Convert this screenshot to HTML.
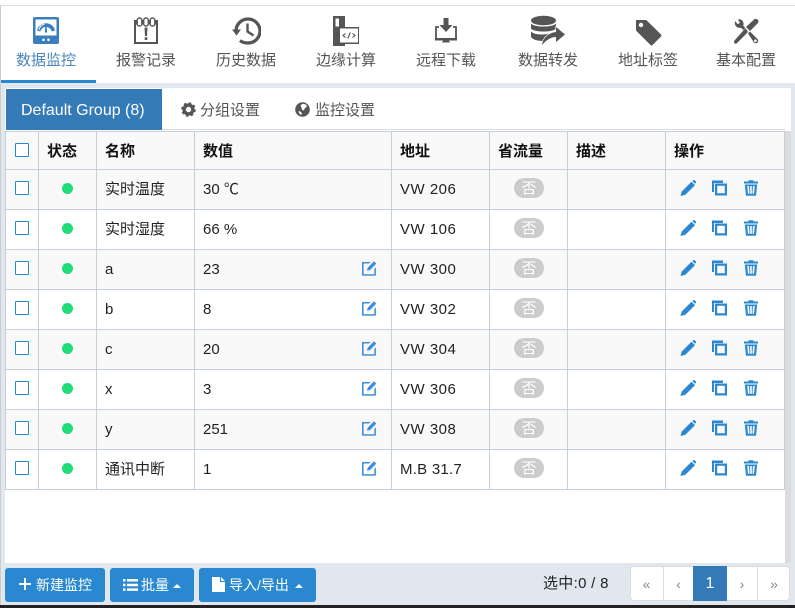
<!DOCTYPE html>
<html lang="zh"><head><meta charset="utf-8"><style>
html,body{margin:0;padding:0}
body{position:relative;width:795px;height:608px;overflow:hidden;background:#e1e7ee;font-family:"Liberation Sans","Noto Sans CJK SC",sans-serif;color:#222}
div,span,svg{position:absolute;box-sizing:border-box}
.t{white-space:nowrap;line-height:20px}
.n{top:51px;width:100px;text-align:center;font-size:15px;color:#555}
.c{font-size:15px;color:#222;margin-top:1px}
.a{letter-spacing:.5px}
.h{font-size:15px;font-weight:bold;color:#111;top:142px}
.l{background:#c6d0dd}
.bt{top:568px;height:34px;background:#2a88d0;border-radius:3px}
.btx{color:#fff;font-size:14px;top:575px}
.pg{top:566px;height:35px;color:#888;text-align:center;line-height:37px;font-size:14px}
.cb{left:15px;width:14px;height:14px;border:1px solid #2a88d0;border-radius:1px;background:#fff}
.dot{left:62px;width:11px;height:11px;border-radius:50%;background:#22dd77}
.bd{left:514px;width:30px;height:20px;border-radius:10px;background:#ccc;color:#fff;text-align:center;font-size:15px;line-height:21px}
</style></head><body>
<svg width="0" height="0" style="left:0;top:0"><defs>
<symbol id="pen" viewBox="0 0 16 16"><path d="M0.500 16l1.200-4.500L11.500 1.700l3.500 3.500-9.800 9.700zM12.300 1l1-.8c.4-.3.900-.3 1.300 0l1.300 1.300c.3.400.3.900 0 1.300l-.9 1z" fill="#2a88d0"/></symbol>
<symbol id="cp" viewBox="0 0 16 16"><path d="M1 0.500h11v2.500H3v9H1z" fill="#2a88d0"/><path d="M4 3.500h12v12H4zM6.200 5.700v7.600h7.600V5.700z" fill="#2a88d0" fill-rule="evenodd"/></symbol>
<symbol id="tr" viewBox="0 0 14 16"><path d="M0 1.500h4.500V.300h5v1.200H14v2H0zM.8 4.500h12.400L12 15.700H2zM3.300 6l.7 7.800h1.500L5 6zM6.200 6v7.800h1.600V6zM9 6l-.5 7.800H10L10.700 6z" fill="#2a88d0" fill-rule="evenodd"/></symbol>
<symbol id="ed" viewBox="0 0 16 16"><path d="M1 2h8.500L8 3.500H2.600v10.700h10.700V9l1.600-1.600V15a.8.800 0 0 1-.8.800H1.800A.8.800 0 0 1 1 15z" fill="#3f8fd8"/><path d="M6 10.800l.7-3L13 1.300l2.300 2.300-6.300 6.500z" fill="#3f8fd8"/></symbol>
</defs></svg>

<!-- nav -->
<div style="left:0;top:0;width:795px;height:83px;background:#fff"></div>
<div style="left:0;top:5px;width:795px;height:1px;background:#ddd"></div>
<div style="left:0;top:5px;width:1px;height:78px;background:#ccc"></div>
<div style="left:1px;top:80px;width:95px;height:3px;background:#2a88d0"></div>

<svg style="left:33px;top:17px" width="26" height="27" viewBox="0 0 26 27"><rect width="26" height="27" rx="2" fill="#3a7fbd"/><rect x="2.500" y="2.500" width="21" height="16" fill="#fff"/><path d="M4 13.500A9.200 9.200 0 0 1 22 13.500L18.800 14.500A6 6 0 0 0 7.200 14.500z" fill="#3a7fbd"/><path d="M6 13a7 7 0 0 1 5.500-6" fill="none" stroke="#fff" stroke-width="1"/><path d="M12.300 9.500h1.400l.5 6h-2.400z" fill="#3a7fbd"/><circle cx="10.500" cy="22.800" r="1.300" fill="#fff"/><circle cx="15.500" cy="22.800" r="1.300" fill="#fff"/></svg>
<div class="t n" style="left:-4px;color:#4a86bd">数据监控</div>

<svg style="left:134px;top:17px" width="24" height="27" viewBox="0 0 24 27"><path d="M1 4h22v22H1z" fill="none" stroke="#555" stroke-width="2"/><path d="M1 4h22v3.500H1z" fill="#555"/><rect x="3.200" y="1" width="4.600" height="8" rx="2.300" fill="#fff" stroke="#555" stroke-width="1.400"/><rect x="9.700" y="1" width="4.600" height="8" rx="2.300" fill="#fff" stroke="#555" stroke-width="1.400"/><rect x="16.200" y="1" width="4.600" height="8" rx="2.300" fill="#fff" stroke="#555" stroke-width="1.400"/><path d="M10.500 10.500h3l-.5 8.500h-2zM10.700 20.300h2.600v2.700h-2.600z" fill="#555"/></svg>
<div class="t n" style="left:96px">报警记录</div>

<svg style="left:232px;top:17px" width="29" height="28" viewBox="0 0 29 28"><path d="M4 14A12 12 0 1 1 15.500 26 12 12 0 0 1 8 23.500" fill="none" stroke="#555" stroke-width="3.300"/><path d="M0 12.500h9l-4.500 6z" fill="#555"/><path d="M15.500 6.500v8l6 4" fill="none" stroke="#555" stroke-width="2.400"/></svg>
<div class="t n" style="left:196px">历史数据</div>

<svg style="left:333px;top:16px" width="26" height="30" viewBox="0 0 26 30"><path d="M0 0h12v11h14v17H12v2H0z" fill="#555"/><rect x="2.500" y="2.500" width="3.500" height="8" fill="#fff"/><rect x="7" y="12.500" width="18" height="14" fill="#fff"/><path d="M12.500 17.500l-2.500 2 2.500 2M19.500 17.500l2.500 2-2.500 2M17.300 16.500l-2.500 6" fill="none" stroke="#444" stroke-width="1"/></svg>
<div class="t n" style="left:296px">边缘计算</div>

<svg style="left:435px;top:17px" width="22" height="27" viewBox="0 0 22 27"><path d="M8.500 1h5v7h4l-6.500 7-6.500-7h4z" fill="#555"/><path d="M4 10H1v12h20V10h-3" fill="none" stroke="#555" stroke-width="1.800"/><path d="M0 21h22v2.500H0zM8 23.500h6l1 2H7z" fill="#555"/></svg>
<div class="t n" style="left:396px">远程下载</div>

<svg style="left:530px;top:15px" width="36" height="31" viewBox="0 0 36 31"><ellipse cx="13.500" cy="5.500" rx="12.500" ry="4.800" fill="#555"/><path d="M1 8.500C4 12.500 23 12.500 26 8.500V13.500C23 17.500 4 17.500 1 13.500z" fill="#555"/><path d="M1 16.500C4 20 14 20.500 24 17.500L14 26C8 26 3 25 1 22z" fill="#555"/><path d="M12 30c1-7 6-12 14-13v-5l9 7.500-9 7.500v-5c-5 0-9 2.500-14 8z" fill="#555" stroke="#fff" stroke-width="1.300" paint-order="stroke"/></svg>
<div class="t n" style="left:498px">数据转发</div>

<svg style="left:635px;top:19px" width="27" height="27" viewBox="0 0 27 27"><path fill-rule="evenodd" d="M1 1h9.500a2 2 0 0 1 1.400.6L26 15.500a1.500 1.500 0 0 1 0 2L17.500 26a1.500 1.500 0 0 1-2 0L1.500 12a2 2 0 0 1-.5-1.500zM6 3.800a2.200 2.200 0 1 0 0 4.400 2.200 2.200 0 0 0 0-4.400z" fill="#555"/></svg>
<div class="t n" style="left:598px">地址标签</div>

<svg style="left:733px;top:18px" width="26" height="26" viewBox="0 0 26 26"><path d="M2 3l2.500 3L7 5 5 1.500C7 .500 10 2 10.500 5c.2 1 0 2-.3 2.700l2.800 3-2 2-3-3C5 10.500 1 8.500 2 3zM15 15.500l2-2 7.500 7.500c1 1.200 1 2.500 0 3.500s-2.500 1-3.500 0z" fill="#555"/><path d="M24.500 1.500c-1-1-2.500-.8-3.500 0L13 9l4 4 8-8c.9-1 .5-2.500-.5-3.500zM12.500 10L1.500 22.500c-.8.800-.8 2 0 2.800.8.600 1.700.5 2.500-.2L15 14z" fill="#555" stroke="#fff" stroke-width=".8" paint-order="stroke"/><circle cx="22.400" cy="22.700" r="1.300" fill="#fff"/></svg>
<div class="t n" style="left:696px">基本配置</div>

<!-- content panel -->
<div style="left:5px;top:88px;width:786px;height:475px;background:#fff"></div>
<div style="left:785px;top:131px;width:6px;height:432px;background:#dcdcdc"></div>
<div style="left:6px;top:129px;width:779px;height:1px;background:#ddd"></div>
<div style="left:6px;top:89px;width:156px;height:41px;background:#337ab7"></div>
<div class="t" style="left:21px;top:101px;color:#fff;font-size:16px">Default Group (8)</div>
<svg style="left:181px;top:102px" width="15" height="15" viewBox="0 0 15 15"><circle cx="7.500" cy="7.500" r="4.400" fill="none" stroke="#555" stroke-width="3.400"/><circle cx="7.500" cy="7.500" r="6.300" fill="none" stroke="#555" stroke-width="2" stroke-dasharray="2.500 2.450"/></svg>
<div class="t" style="left:200px;top:101px;font-size:15px;color:#555">分组设置</div>
<svg style="left:295px;top:102px" width="15" height="15" viewBox="0 0 15 15"><circle cx="7.500" cy="7.500" r="7.300" fill="#555"/><path d="M7 2c2-.5 4 .3 5 1.700-.3 1.500-1.500 2.300-2.500 2.800l-.5 2-2-.7-.5-2.300L5.500 4z" fill="#fff"/><path d="M3.500 9l2 .5 1.500 2-1 1.500-2-2z" fill="#fff"/></svg>
<div class="t" style="left:315px;top:101px;font-size:15px;color:#555">监控设置</div>

<!-- table -->
<div style="left:6px;top:132px;width:778px;height:37px;background:#f9f9f9"></div>
<div style="left:6px;top:170px;width:778px;height:39px;background:#f9f9f9"></div>
<div style="left:6px;top:250px;width:778px;height:39px;background:#f9f9f9"></div>
<div style="left:6px;top:330px;width:778px;height:39px;background:#f9f9f9"></div>
<div style="left:6px;top:410px;width:778px;height:39px;background:#f9f9f9"></div>

<div class="l" style="left:5px;top:131px;width:780px;height:1px"></div>
<div class="l" style="left:5px;top:169px;width:780px;height:1px"></div>
<div class="l" style="left:5px;top:209px;width:780px;height:1px"></div>
<div class="l" style="left:5px;top:249px;width:780px;height:1px"></div>
<div class="l" style="left:5px;top:289px;width:780px;height:1px"></div>
<div class="l" style="left:5px;top:329px;width:780px;height:1px"></div>
<div class="l" style="left:5px;top:369px;width:780px;height:1px"></div>
<div class="l" style="left:5px;top:409px;width:780px;height:1px"></div>
<div class="l" style="left:5px;top:449px;width:780px;height:1px"></div>
<div class="l" style="left:5px;top:489px;width:780px;height:1px"></div>
<div class="l" style="left:5px;top:131px;width:1px;height:359px"></div>
<div class="l" style="left:38px;top:131px;width:1px;height:359px"></div>
<div class="l" style="left:96px;top:131px;width:1px;height:359px"></div>
<div class="l" style="left:194px;top:131px;width:1px;height:359px"></div>
<div class="l" style="left:391px;top:131px;width:1px;height:359px"></div>
<div class="l" style="left:489px;top:131px;width:1px;height:359px"></div>
<div class="l" style="left:567px;top:131px;width:1px;height:359px"></div>
<div class="l" style="left:665px;top:131px;width:1px;height:359px"></div>
<div class="l" style="left:784px;top:131px;width:1px;height:359px"></div>

<div class="cb" style="top:143px"></div>
<div class="t h" style="left:47px">状态</div>
<div class="t h" style="left:105px">名称</div>
<div class="t h" style="left:203px">数值</div>
<div class="t h" style="left:400px">地址</div>
<div class="t h" style="left:498px">省流量</div>
<div class="t h" style="left:576px">描述</div>
<div class="t h" style="left:674px">操作</div>

<!-- row 1 -->
<div class="cb" style="top:181px"></div><div class="dot" style="top:183px"></div>
<div class="t c" style="left:105px;top:179px">实时温度</div><div class="t c" style="left:203px;top:179px">30 ℃</div><div class="t c a" style="left:400px;top:179px">VW 206</div>
<div class="bd" style="top:178px">否</div>
<svg style="left:680px;top:180px" width="16" height="16"><use href="#pen"/></svg><svg style="left:711px;top:180px" width="16" height="16"><use href="#cp"/></svg><svg style="left:744px;top:180px" width="14" height="16"><use href="#tr"/></svg>
<!-- row 2 -->
<div class="cb" style="top:221px"></div><div class="dot" style="top:223px"></div>
<div class="t c" style="left:105px;top:219px">实时湿度</div><div class="t c" style="left:203px;top:219px">66 %</div><div class="t c a" style="left:400px;top:219px">VW 106</div>
<div class="bd" style="top:218px">否</div>
<svg style="left:680px;top:220px" width="16" height="16"><use href="#pen"/></svg><svg style="left:711px;top:220px" width="16" height="16"><use href="#cp"/></svg><svg style="left:744px;top:220px" width="14" height="16"><use href="#tr"/></svg>
<!-- row 3 -->
<div class="cb" style="top:261px"></div><div class="dot" style="top:263px"></div>
<div class="t c" style="left:105px;top:259px">a</div><div class="t c" style="left:203px;top:259px">23</div><div class="t c a" style="left:400px;top:259px">VW 300</div>
<svg style="left:361px;top:260px" width="16" height="16"><use href="#ed"/></svg>
<div class="bd" style="top:258px">否</div>
<svg style="left:680px;top:260px" width="16" height="16"><use href="#pen"/></svg><svg style="left:711px;top:260px" width="16" height="16"><use href="#cp"/></svg><svg style="left:744px;top:260px" width="14" height="16"><use href="#tr"/></svg>
<!-- row 4 -->
<div class="cb" style="top:301px"></div><div class="dot" style="top:303px"></div>
<div class="t c" style="left:105px;top:299px">b</div><div class="t c" style="left:203px;top:299px">8</div><div class="t c a" style="left:400px;top:299px">VW 302</div>
<svg style="left:361px;top:300px" width="16" height="16"><use href="#ed"/></svg>
<div class="bd" style="top:298px">否</div>
<svg style="left:680px;top:300px" width="16" height="16"><use href="#pen"/></svg><svg style="left:711px;top:300px" width="16" height="16"><use href="#cp"/></svg><svg style="left:744px;top:300px" width="14" height="16"><use href="#tr"/></svg>
<!-- row 5 -->
<div class="cb" style="top:341px"></div><div class="dot" style="top:343px"></div>
<div class="t c" style="left:105px;top:339px">c</div><div class="t c" style="left:203px;top:339px">20</div><div class="t c a" style="left:400px;top:339px">VW 304</div>
<svg style="left:361px;top:340px" width="16" height="16"><use href="#ed"/></svg>
<div class="bd" style="top:338px">否</div>
<svg style="left:680px;top:340px" width="16" height="16"><use href="#pen"/></svg><svg style="left:711px;top:340px" width="16" height="16"><use href="#cp"/></svg><svg style="left:744px;top:340px" width="14" height="16"><use href="#tr"/></svg>
<!-- row 6 -->
<div class="cb" style="top:381px"></div><div class="dot" style="top:383px"></div>
<div class="t c" style="left:105px;top:379px">x</div><div class="t c" style="left:203px;top:379px">3</div><div class="t c a" style="left:400px;top:379px">VW 306</div>
<svg style="left:361px;top:380px" width="16" height="16"><use href="#ed"/></svg>
<div class="bd" style="top:378px">否</div>
<svg style="left:680px;top:380px" width="16" height="16"><use href="#pen"/></svg><svg style="left:711px;top:380px" width="16" height="16"><use href="#cp"/></svg><svg style="left:744px;top:380px" width="14" height="16"><use href="#tr"/></svg>
<!-- row 7 -->
<div class="cb" style="top:421px"></div><div class="dot" style="top:423px"></div>
<div class="t c" style="left:105px;top:419px">y</div><div class="t c" style="left:203px;top:419px">251</div><div class="t c a" style="left:400px;top:419px">VW 308</div>
<svg style="left:361px;top:420px" width="16" height="16"><use href="#ed"/></svg>
<div class="bd" style="top:418px">否</div>
<svg style="left:680px;top:420px" width="16" height="16"><use href="#pen"/></svg><svg style="left:711px;top:420px" width="16" height="16"><use href="#cp"/></svg><svg style="left:744px;top:420px" width="14" height="16"><use href="#tr"/></svg>
<!-- row 8 -->
<div class="cb" style="top:461px"></div><div class="dot" style="top:463px"></div>
<div class="t c" style="left:105px;top:459px">通讯中断</div><div class="t c" style="left:203px;top:459px">1</div><div class="t c" style="left:400px;top:459px;letter-spacing:.25px">M.B 31.7</div>
<svg style="left:361px;top:460px" width="16" height="16"><use href="#ed"/></svg>
<div class="bd" style="top:458px">否</div>
<svg style="left:680px;top:460px" width="16" height="16"><use href="#pen"/></svg><svg style="left:711px;top:460px" width="16" height="16"><use href="#cp"/></svg><svg style="left:744px;top:460px" width="14" height="16"><use href="#tr"/></svg>

<!-- bottom bar -->
<div class="bt" style="left:5px;width:100px"></div>
<svg style="left:19px;top:578px" width="12" height="12"><path d="M5 0h2v5h5v2H7v5H5V7H0V5h5z" fill="#fff"/></svg>
<div class="t btx" style="left:36px">新建监控</div>
<div class="bt" style="left:110px;width:84px"></div>
<svg style="left:123px;top:579px" width="15" height="12"><path d="M0 0h2.500v2.500H0zM4 0h11v2.500H4zM0 4.700h2.500v2.500H0zM4 4.700h11v2.500H4zM0 9.400h2.500v2.500H0zM4 9.400h11v2.500H4z" fill="#fff"/></svg>
<div class="t btx" style="left:141px">批量</div>
<svg style="left:173px;top:584px" width="8" height="4"><path d="M0 4l4-4 4 4z" fill="#fff"/></svg>
<div class="bt" style="left:199px;width:117px"></div>
<svg style="left:212px;top:577px" width="13" height="15"><path d="M0 0h8v5h5v10H0zM9 0l4 4H9z" fill="#fff"/></svg>
<div class="t btx" style="left:229px">导入/导出</div>
<svg style="left:295px;top:584px" width="8" height="4"><path d="M0 4l4-4 4 4z" fill="#fff"/></svg>

<div class="t" style="left:543px;top:574px;font-size:15px;letter-spacing:.3px;color:#222">选中:0 / 8</div>

<div style="left:630px;top:566px;width:160px;height:35px;background:#fff;border:1px solid #ddd;border-radius:4px"></div>
<div style="left:663px;top:566px;width:1px;height:35px;background:#ddd"></div>
<div style="left:757px;top:566px;width:1px;height:35px;background:#ddd"></div>
<div class="pg" style="left:630px;width:33px">«</div>
<div class="pg" style="left:664px;width:29px">‹</div>
<div style="left:693px;top:566px;width:34px;height:35px;background:#337ab7;color:#fff;text-align:center;line-height:35px;font-size:16px">1</div>
<div class="pg" style="left:727px;width:30px">›</div>
<div class="pg" style="left:758px;width:32px">»</div>

<div style="left:0;top:83px;width:1px;height:522px;background:#ccc"></div>
<div style="left:0;top:605px;width:795px;height:3px;background:#222"></div>
</body></html>
